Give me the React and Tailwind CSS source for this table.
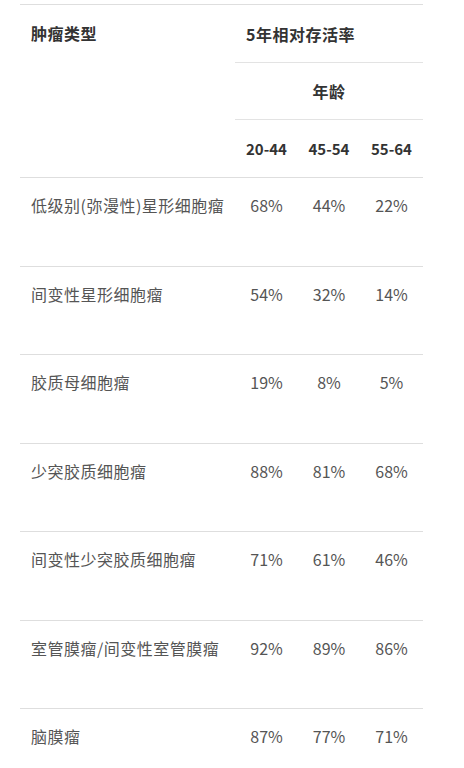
import React from "react";

const rows = [
  { name: "低级别(弥漫性)星形细胞瘤", v: ["68%", "44%", "22%"] },
  { name: "间变性星形细胞瘤", v: ["54%", "32%", "14%"] },
  { name: "胶质母细胞瘤", v: ["19%", "8%", "5%"] },
  { name: "少突胶质细胞瘤", v: ["88%", "81%", "68%"] },
  { name: "间变性少突胶质细胞瘤", v: ["71%", "61%", "46%"] },
  { name: "室管膜瘤/间变性室管膜瘤", v: ["92%", "89%", "86%"] },
  { name: "脑膜瘤", v: ["87%", "77%", "71%"] },
];

export default function App() {
  return (
    <div className="bg-white min-h-[768px] pt-1 pl-5 font-['Noto_Sans_CJK_SC','Noto_Sans',sans-serif] text-[16px] leading-[22px]">
      <table className="w-[403px] border-collapse table-fixed">
        <colgroup>
          <col className="w-[215px]" />
          <col className="w-[63px]" />
          <col className="w-[62px]" />
          <col className="w-[63px]" />
        </colgroup>
        <thead className="text-[#333] font-bold">
          <tr className="h-[58px] border-t border-[#dedede]">
            <th rowSpan={3} className="align-top text-left pl-[11px] pt-[17px] tracking-[0.5px] font-bold">肿瘤类型</th>
            <th colSpan={3} className="text-left pl-[11px] align-middle tracking-[0.5px] font-bold">5年相对存活率</th>
          </tr>
          <tr className="h-[57px] border-t border-[#e3e3e3]">
            <th colSpan={3} className="text-center align-middle tracking-[0.5px] font-bold">年龄</th>
          </tr>
          <tr className="h-[58px] border-t border-[#e3e3e3]">
            {["20-44", "45-54", "55-64"].map((a) => (
              <th key={a} className="text-center align-middle text-[15px] font-bold">{a}</th>
            ))}
          </tr>
        </thead>
        <tbody className="text-[#555]">
          {rows.map((r) => (
            <tr key={r.name} className="h-[88.5px] border-t border-[#dedede]">
              <td className="align-top pl-[11px] pt-[16px] tracking-[0.5px] whitespace-nowrap">{r.name}</td>
              {r.v.map((x, i) => (
                <td key={i} className="align-top text-center pt-[16px]">{x}</td>
              ))}
            </tr>
          ))}
        </tbody>
      </table>
    </div>
  );
}
